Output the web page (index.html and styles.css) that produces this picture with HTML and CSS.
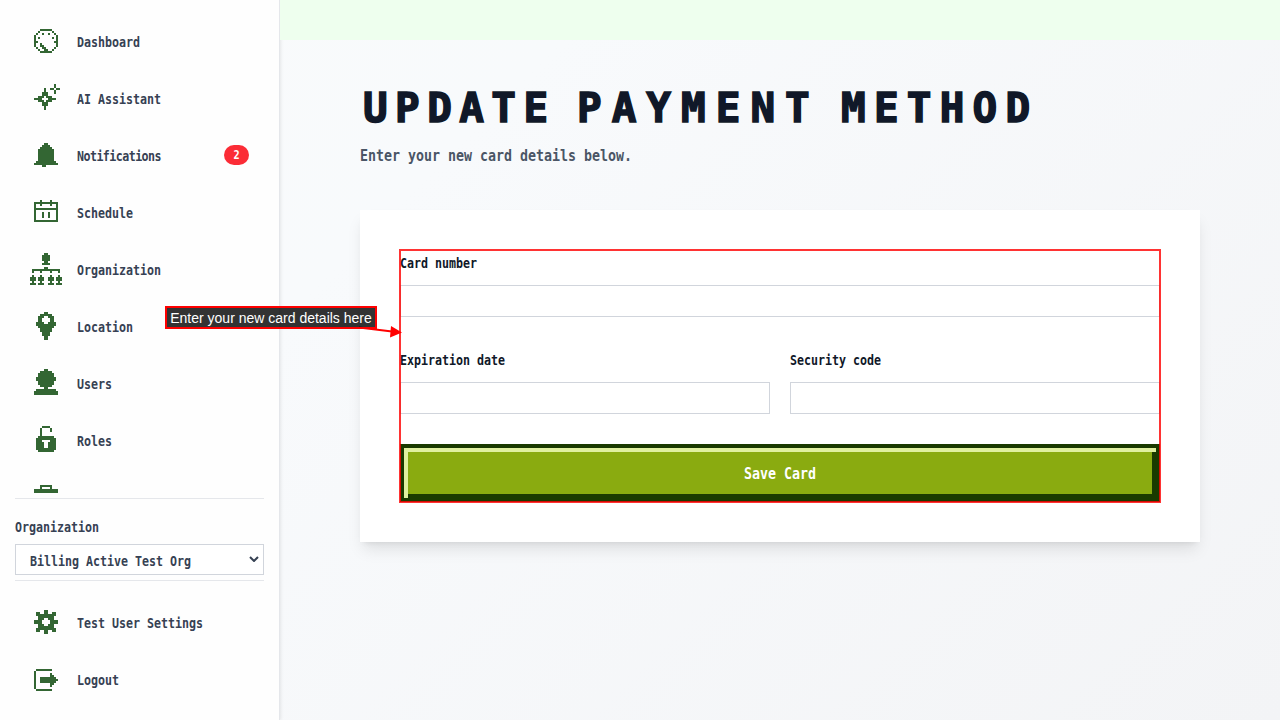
FILE: index.html
```html
<!DOCTYPE html>
<html lang="en">
<head>
<meta charset="utf-8">
<title>Update Payment Method</title>
<link rel="stylesheet" href="styles.css">
</head>
<body>
<div class="app">
  <aside class="sidebar">
    <nav class="nav nav-main">
      <a class="nav-item"><svg class="icon" viewBox="0 -.5 16 16"><path d="M5 2h6M4 3h1m6 0h1M3 4h1m2 0h1m2 0h1m2 0h1M2 5h1m10 0h1M2 6h1m1 0h1m6 0h1m1 0h1M2 7h1m10 0h1M2 8h2m8 0h2M2 9h1m2 0h1m7 0h1M2 10h1m2 0h2m6 0h1M3 11h1m2 0h2m4 0h1M4 12h1m2 0h2m2 0h1M5 13h6"/></svg><span class="txt">Dashboard</span></a>
      <a class="nav-item"><svg class="icon" viewBox="0 -.5 16 16"><path d="M12 1h1M12 2h1M10 3h2m1 0h2M12 4h1M12 5h1M7 3h1M7 4h1M6 5h3M6 6h3M4 7h3m1 0h3M2 8h4m3 0h4M4 9h3m1 0h3M6 10h3M6 11h3M7 12h1M7 13h1"/></svg><span class="txt">AI Assistant</span></a>
      <a class="nav-item"><svg class="icon" viewBox="0 -.5 16 16"><path d="M7 2h2M6 3h4M5 4h6M4 5h8M4 6h8M4 7h8M4 8h8M4 9h8M4 10h8M3 11h10M2 12h12M6 13h2"/></svg><span class="txt tight">Notifications</span><span class="badge"><span class="digit">2</span></span></a>
      <a class="nav-item"><svg class="icon" viewBox="0 -.5 16 16"><path d="M5 2h1m4 0h1M2 3h12M2 4h1m2 0h1m4 0h1m2 0h1M2 5h1m10 0h1M2 6h12M2 7h1m10 0h1M2 8h1m3 0h1m2 0h1m3 0h1M2 9h1m3 0h1m2 0h1m3 0h1M2 10h1m3 0h1m2 0h1m3 0h1M2 11h1m10 0h1M2 12h12"/></svg><span class="txt">Schedule</span></a>
      <a class="nav-item"><svg class="icon" viewBox="0 -.5 16 16"><path d="M7 0h2M6 1h4M6 2h4M6 3h4M7 4h2M6 5h4M7 7h2M1 8h14M1 9h1m3 0h1m4 0h1m3 0h1M1 11h1m3 0h1m4 0h1m3 0h1M0 12h3m1 0h3m2 0h3m1 0h3M0 13h3m1 0h3m2 0h3m1 0h3M1 14h1m3 0h1m4 0h1m3 0h1M0 15h3m1 0h3m2 0h3m1 0h3"/></svg><span class="txt">Organization</span></a>
      <a class="nav-item"><svg class="icon" viewBox="0 -.5 16 16"><path d="M7 1h2M5 2h6M4 3h3m2 0h3M4 4h2m4 0h2M4 5h2m4 0h2M3 6h4m2 0h4M3 7h10M4 8h8M5 9h6M5 10h6M6 11h4M6 12h4M7 13h2M7 14h2"/></svg><span class="txt">Location</span></a>
      <a class="nav-item"><svg class="icon" viewBox="0 -.5 16 16"><path d="M7 1h2M5 2h6M4 3h8M4 4h8M3 5h10M3 6h10M4 7h8M4 8h8M5 9h6M7 10h2M3 11h10M2 12h12M2 13h12"/></svg><span class="txt">Users</span></a>
      <a class="nav-item"><svg class="icon" viewBox="0 -.5 16 16"><path d="M6 1h4M5 2h1m4 0h1M5 3h1m4 0h1M5 4h1M5 5h1M4 6h8M3 7h10M3 8h3m4 0h3M3 9h4m2 0h4M3 10h4m2 0h4M3 11h4m2 0h4M3 12h10M4 13h8"/></svg><span class="txt">Roles</span></a>
      <a class="nav-item"><svg class="icon" viewBox="0 -.5 16 16"><path d="M5 2h6M5 3h1m4 0h1M2 4h12M2 5h12M2 6h12M2 7h12"/></svg></a>
    </nav>
    <div class="org">
      <span class="txt org-label">Organization</span>
      <div class="select"><span class="txt">Billing Active Test Org</span><svg class="chevron" viewBox="0 0 10 6"><path d="M1 1l4 4 4-4"/></svg></div>
    </div>
    <nav class="nav nav-user">
      <a class="nav-item"><svg class="icon" viewBox="0 -.5 16 16"><path d="M7 2h2M3 3h2m2 0h2m2 0h2M3 4h10M4 5h8M4 6h3m2 0h3M2 7h4m4 0h4M2 8h4m4 0h4M4 9h3m2 0h3M4 10h8M3 11h10M3 12h2m2 0h2m2 0h2M7 13h2"/></svg><span class="txt">Test User Settings</span></a>
      <a class="nav-item"><svg class="icon" viewBox="0 -.5 16 16"><path d="M3 3h8M2 4h1M2 5h1m7 0h1M2 6h1m7 0h2M2 7h1m2 0h8M2 8h1m2 0h9M2 9h1m2 0h8M2 10h1m7 0h2M2 11h1m7 0h1M2 12h1M3 13h8"/></svg><span class="txt">Logout</span></a>
    </nav>
  </aside>
  <main class="main">
    <div class="banner"></div>
    <div class="content">
      <h1 class="title"><span class="w1">UPDATE</span> <span class="w2">PAYMENT</span> <span class="w3">METHOD</span></h1>
      <p class="subtitle"><span class="txt-lg">Enter your new card details below.</span></p>
      <form class="card">
        <div class="field"><label class="txt">Card number</label><div class="input"></div></div>
        <div class="row">
          <div class="field"><label class="txt">Expiration date</label><div class="input"></div></div>
          <div class="field"><label class="txt">Security code</label><div class="input"></div></div>
        </div>
        <button class="save" type="button"><span class="txt-lg">Save Card</span></button>
        <div class="highlight"></div>
      </form>
    </div>
  </main>
  <svg class="arrow" viewBox="0 0 46 18"><path class="line" d="M3 4.5L36 8.5"/><path class="head" d="M35 3L46 9.5 34 14.500z"/></svg>
  <div class="callout">Enter your new card details here</div>
</div>
</body>
</html>
```
FILE: styles.css
```css
* { box-sizing: border-box; }
body { margin: 0; font-family: "DejaVu Sans Mono", monospace; }
.app { position: relative; display: flex; width: 1280px; height: 720px; overflow: hidden; background: linear-gradient(135deg, #f9fafb, #f8fafc 30%, #f3f4f6); }

.sidebar { display: flex; flex-direction: column; width: 280px; height: 720px; padding: 0 15px; background: #fefefe; border-right: 1px solid #e5e7eb; box-shadow: 1px 0 3px rgba(0, 0, 0, .08); }
.nav { display: flex; flex-direction: column; }
.nav-main { height: 493px; padding-top: 12.5px; overflow: hidden; }
.nav-item { display: flex; flex: none; align-items: center; height: 57px; padding: 0 15px; color: #364153; }
.icon { flex: none; width: 32px; height: 32px; margin-right: 15px; stroke: #336633; fill: none; shape-rendering: crispEdges; }
.txt { display: inline-block; font-size: 14px; font-weight: 700; line-height: 20px; white-space: nowrap; transform: scaleX(.8306); transform-origin: left; }
.tight { letter-spacing: -.65px; }
.nav-item .txt { margin-top: 1px; }
.txt-lg { display: inline-block; font-size: 15.5px; font-weight: 700; line-height: 24px; white-space: nowrap; transform: scaleX(.857); transform-origin: left; }
.badge { display: flex; align-items: center; justify-content: center; width: 25px; height: 20px; margin-left: auto; border-radius: 10px; background: #fb2c36; color: #fff; font-size: 12px; font-weight: 700; }
.digit { transform: scaleX(.85); }

.org { height: 83px; margin: 5px 0 0; padding-top: 18px; border-top: 1px solid #e5e7eb; border-bottom: 1px solid #e5e7eb; color: #364153; }
.org-label { display: block; }
.select { display: flex; align-items: center; justify-content: space-between; height: 31px; margin-top: 7px; padding: 2px 4px 0 14px; border: 1px solid #d1d5dc; background: #fff; }
.select .txt { width: 160px; }
.chevron { width: 10px; height: 6px; margin-top: -3px; fill: none; stroke: #364153; stroke-width: 2; }
.nav-user { padding-top: 12.5px; }

.main { flex: 1; }
.banner { height: 40px; background: #eeffee; }
.content { width: 840px; margin-left: 80px; padding-top: 44px; }
.title { display: flex; height: 48px; margin: 0; padding-left: 3px; color: #101828; font-family: "DejaVu Sans Mono", monospace; font-size: 41px; font-weight: 700; line-height: 48px; white-space: nowrap; -webkit-text-stroke: 1.5px #101828; }
.w1 { width: 214px; letter-spacing: 7.4px; }
.w2 { width: 264px; letter-spacing: 10px; }
.w3 { letter-spacing: 8.2px; }
.subtitle { height: 24px; margin: 12px 0 0; color: #4a5565; }
.card { position: relative; height: 332px; margin-top: 42px; padding: 40px; background: #fff; color: #101828; box-shadow: 0 10px 15px -3px rgba(0, 0, 0, .1), 0 4px 6px -4px rgba(0, 0, 0, .1); }
.field { height: 97px; padding-top: 2px; }
.field .txt { display: block; line-height: 22px; }
.input { height: 32px; margin-top: 11px; border: 1px solid #d1d5dc; background: #fff; }
.row { display: grid; grid-template-columns: 370px 370px; gap: 20px; }
.save { display: block; width: 760px; height: 58px; padding: 0; border: 4px solid #1a3a00; border-radius: 0; background: #8aab10; box-shadow: inset 4px 4px 0 #e0f0a0, inset -4px -4px 0 #1a3a00; color: #fff; font-family: inherit; }
.save .txt-lg { transform-origin: center; margin-top: 2px; }

.highlight { position: absolute; top: 39px; left: 39px; width: 762px; height: 254px; border: 2px solid rgba(255, 0, 0, .8); }
.callout { position: absolute; top: 306px; left: 165px; width: 212px; height: 23px; border: 2px solid #f00; background: rgba(0, 0, 0, .8); color: #fff; font: 14px/20px "Liberation Sans", Arial, sans-serif; text-align: center; white-space: nowrap; }
.arrow { position: absolute; top: 323px; left: 356px; width: 46px; height: 18px; }
.line { stroke: #f00; stroke-width: 2; }
.head { fill: #f00; }
```
